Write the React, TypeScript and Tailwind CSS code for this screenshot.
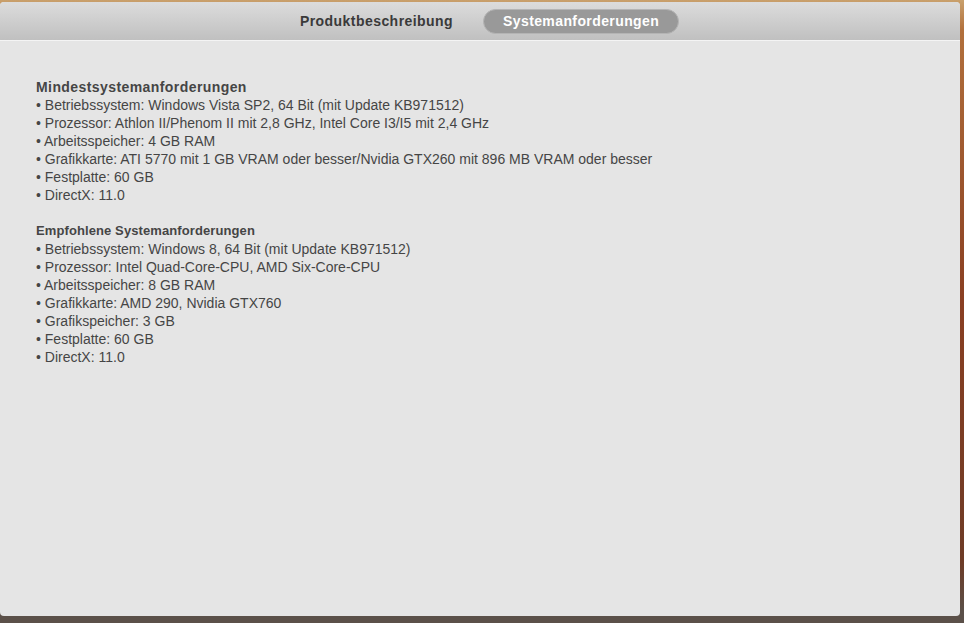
import React from "react";

const minimum = [
  "Betriebssystem: Windows Vista SP2, 64 Bit (mit Update KB971512)",
  "Prozessor: Athlon II/Phenom II mit 2,8 GHz, Intel Core I3/I5 mit 2,4 GHz",
  "Arbeitsspeicher: 4 GB RAM",
  "Grafikkarte: ATI 5770 mit 1 GB VRAM oder besser/Nvidia GTX260 mit 896 MB VRAM oder besser",
  "Festplatte: 60 GB",
  "DirectX: 11.0",
];

const recommended = [
  "Betriebssystem: Windows 8, 64 Bit (mit Update KB971512)",
  "Prozessor: Intel Quad-Core-CPU, AMD Six-Core-CPU",
  "Arbeitsspeicher: 8 GB RAM",
  "Grafikkarte: AMD 290, Nvidia GTX760",
  "Grafikspeicher: 3 GB",
  "Festplatte: 60 GB",
  "DirectX: 11.0",
];

function Section({
  title,
  titleClass,
  items,
}: {
  title: string;
  titleClass: string;
  items: string[];
}) {
  return (
    <div>
      <div className={titleClass}>{title}</div>
      {items.map((t, i) => (
        <div key={i}>• {t}</div>
      ))}
    </div>
  );
}

export default function App() {
  return (
    <div
      className="w-[964px] h-[623px] overflow-hidden pt-[2px] pb-[7px] pr-[4px] bg-[linear-gradient(to_bottom,#c9a06c_0px,#b2703c_30px,#8a3f22_300px,#6e3b26_560px,#5b5049_612px)]"
      style={{ fontFamily: '"Liberation Sans", Arial, sans-serif' }}
    >
      <div className="h-full flex flex-col rounded-[4px] overflow-hidden bg-[#e5e5e5]">
        <div className="h-[39px] flex items-center justify-center gap-[30px] pl-[19px] bg-[linear-gradient(to_bottom,#dcdcdc,#c0c0c0)] border-b border-[#f4f4f4]">
          <div className="text-[14px] font-bold tracking-[0.45px] text-[#3a3a3a]">Produktbeschreibung</div>
          <div className="h-[25px] w-[196px] flex items-center justify-center rounded-full bg-[#999999] border border-[#b4b4b4] text-[14px] font-bold tracking-[0.4px] text-white">
            Systemanforderungen
          </div>
        </div>
        <div className="flex-1 pt-[37px] pl-[36px] text-[14px] leading-[18px] text-[#454545] flex flex-col gap-[18px]">
          <Section
            title="Mindestsystemanforderungen"
            titleClass="font-bold tracking-[0.42px]"
            items={minimum}
          />
          <Section
            title="Empfohlene Systemanforderungen"
            titleClass="font-bold text-[13px] tracking-[0.1px]"
            items={recommended}
          />
        </div>
      </div>
    </div>
  );
}
